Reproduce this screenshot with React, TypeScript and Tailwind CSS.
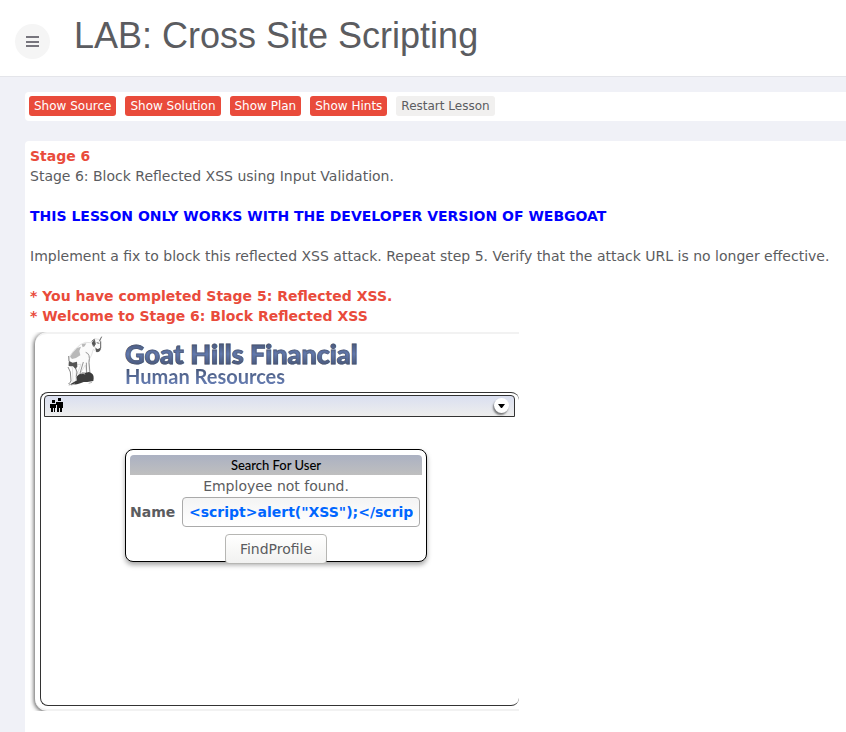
import { useState } from "react";

const lessonActions = ["Show Source", "Show Solution", "Show Plan", "Show Hints"];

function GoatLogo() {
  return (
    <svg width="60" height="56" viewBox="0 12 180 168" className="shrink-0" aria-hidden="true">
      <path d="M43 80 L57 61 L77 43 L92 37 L108 38 L119 26 L137 29 L137 60 L126 67 L115 58 L109 77 L101 91 L103 128 L95 132 L91 105 L75 132 L67 131 L78 103 L65 104 L62 153 L54 161 L52 112 L40 105 Z" fill="#fbfbfb" stroke="#d4d4d4" strokeWidth="2" />
      <path d="M53 68 L66 54 L78 50 L73 63 L76 76 L63 84 L51 87 L45 80 Z M80 43 L94 40 L89 49 L83 52 Z" fill="#b9b9b9" />
      <path d="M92 67 Q107 71 102 98 L105 130 M85 96 L75 130 M94 98 L95 130" fill="none" stroke="#959595" strokeWidth="3" />
      <path d="M110 34 L118 28 L121 42 L116 51 M133 34 L140 20 M137 34 L137 54 L128 65 L123 62 L137 54 M125 38 L133 40 M121 53 L127 60" fill="none" stroke="#666" strokeWidth="3" />
      <path d="M118 29 L121 43 L114 49 L110 39 Z M121 56 L138 58 L132 65 L124 66 Z" fill="#555" />
      <path d="M41 78 L42 93 M39 111 L46 126 L48 153 L43 161 M60 111 L66 126 L64 139 L66 151" fill="none" stroke="#888" strokeWidth="3" />
      <path d="M42 93 L53 98 L66 95 L67 110 L61 116 L54 109 L41 108 Z" fill="#555" />
      <path d="M66 139 Q75 127 92 128 L102 126 Q117 130 116 145 L115 153 L97 156 L86 156 L76 160 L66 163 L40 166 L57 156 L66 151 Z" fill="#3d3d3d" />
      <path d="M76 131 L83 126 L89 128 L91 134 L84 131 L78 133 Z" fill="#aaa" />
      <path d="M39 160 L49 165 L60 162 M101 160 L111 157" fill="none" stroke="#bbb" strokeWidth="3" />
    </svg>
  );
}

function PeopleIcon() {
  return (
    <svg width="13" height="14" viewBox="0 0 13 14" shapeRendering="crispEdges" aria-hidden="true">
      <path d="M2 2h3v3H2z M8 0h3v3H8z M0 6h6v4H5v4H4v-4H3v4H1v-4H0z M6 4h7v6h-1v4h-2v-4H9v4H7V7H6z" fill="#000" />
    </svg>
  );
}

function SearchForm() {
  const [name, setName] = useState('<script>alert("XSS");</script>');
  return (
    <form
      onSubmit={(e) => e.preventDefault()}
      className="ml-[81px] mt-8 flex w-[302px] flex-col rounded-lg border border-black bg-white px-1 pt-[5px] shadow-[0px_3px_5px_rgba(0,0,0,0.35)]"
    >
      <h3 className="h-5 rounded-t-sm bg-linear-to-b from-[#abb1c2] to-[#bfbfbf] text-center font-[Lato,sans-serif] text-[13px] leading-5 font-medium text-black">
        Search For User
      </h3>
      <p className="mt-px text-center">Employee not found.</p>
      <div className="mt-px flex items-center justify-between pr-0.5">
        <label htmlFor="employee" className="font-bold">Name</label>
        <input
          id="employee"
          value={name}
          onChange={(e) => setName(e.target.value)}
          className="h-[30px] w-[238px] rounded border border-[#aaa] bg-linear-to-b from-[#f4f4f4] to-white px-1.5 font-bold text-[#0066ff] outline-none"
        />
      </div>
      <button className="-mb-[3px] mt-[7px] h-[30px] w-[102px] self-center rounded border border-[#b6b6b3] bg-linear-to-b from-white to-[#f1f1f0]">
        FindProfile
      </button>
    </form>
  );
}

function GoatHills() {
  return (
    <section className="mt-[2px] w-[489px] max-w-full overflow-hidden pl-[5px] pt-1">
      <div className="rounded-l-xl border-y-2 border-y-[#f2f2f2] bg-white pb-[3px] pl-[5px] shadow-[-1px_1px_4px_rgba(0,0,0,0.65)] [clip-path:inset(0px_0px_0px_-5px)]">
        <header className="flex h-[58px] pl-[15px]">
          <GoatLogo />
          <div className="ml-[10px] pt-2 font-[Lato,sans-serif]">
            <h2 className="bg-linear-to-b from-[#465578] via-[#6279ad] to-[#465578] bg-clip-text text-[27px] leading-6 font-black whitespace-nowrap text-transparent [-webkit-text-stroke:1px_#48506388]">
              Goat Hills Financial
            </h2>
            <p className="bg-linear-to-b from-[#41506f] to-[#6b83bb] bg-clip-text text-xl leading-5 font-bold text-transparent">Human Resources</p>
          </div>
        </header>
        <div className="h-[314px] rounded-lg border border-r-0 border-[#333] pl-[3px] pr-1 pt-0.5">
          <div className="flex h-[22px] items-start justify-between rounded-t border border-[#333] bg-linear-to-b from-[#dadff0] to-[#eeeeed] px-[5px] pt-0.5">
            <PeopleIcon />
            <button
              aria-label="Open menu"
              className="flex size-[15px] items-center justify-center rounded-full bg-white shadow-[-1px_2px_2px_rgba(0,0,0,0.5)]"
            >
              <svg width="7" height="4" viewBox="0 0 7 4"><path d="M0 0H7L4 4H3Z" fill="#000" /></svg>
            </button>
          </div>
          <SearchForm />
        </div>
      </div>
    </section>
  );
}

export default function App() {
  return (
    <div className="flex min-h-screen flex-col bg-[#f0f1f7] font-['DejaVu_Sans',sans-serif] text-sm leading-5 text-[#5b5c60]">
      <header className="flex h-[77px] items-start border-b border-[#e4e5ea] bg-white pl-[15px]">
        <button aria-label="Toggle menu" className="mt-6 flex size-[35px] items-center justify-center rounded-full bg-[#f5f5f5]">
          <svg width="13" height="11" viewBox="0 0 13 11" fill="#77757d" shapeRendering="crispEdges" aria-hidden="true">
            <path d="M0 0h13v2H0z M0 5h13v2H0z M0 9h13v2H0z" />
          </svg>
        </button>
        <h1 className="ml-6 mt-4 font-['Liberation_Sans',Arial,sans-serif] text-[36px] leading-10 whitespace-nowrap">
          LAB: Cross Site Scripting
        </h1>
      </header>
      <nav className="ml-[25px] mt-[15px] flex gap-[9px] rounded-l bg-white p-1 pb-[5px] text-xs">
        {lessonActions.map((action) => (
          <button key={action} className="h-5 rounded-[3px] bg-[#e94b3b] px-[5px] whitespace-nowrap text-white">
            {action}
          </button>
        ))}
        <button className="h-5 rounded-[3px] bg-[#f1f0ef] px-[5px] whitespace-nowrap">Restart Lesson</button>
      </nav>
      <main className="ml-[25px] mt-5 grow rounded-tl bg-white p-[5px]">
        <h2 className="font-bold text-[#e94b3b]">Stage 6</h2>
        <p>Stage 6: Block Reflected XSS using Input Validation.</p>
        <p className="mt-5 font-bold text-[#0000ff]">THIS LESSON ONLY WORKS WITH THE DEVELOPER VERSION OF WEBGOAT</p>
        <p className="mt-5">
          Implement a fix to block this reflected XSS attack. Repeat step 5. Verify that the attack URL is no longer effective.
        </p>
        <div className="mt-5 font-bold text-[#e94b3b]">
          <p>* You have completed Stage 5: Reflected XSS.</p>
          <p>* Welcome to Stage 6: Block Reflected XSS</p>
        </div>
        <GoatHills />
      </main>
    </div>
  );
}
